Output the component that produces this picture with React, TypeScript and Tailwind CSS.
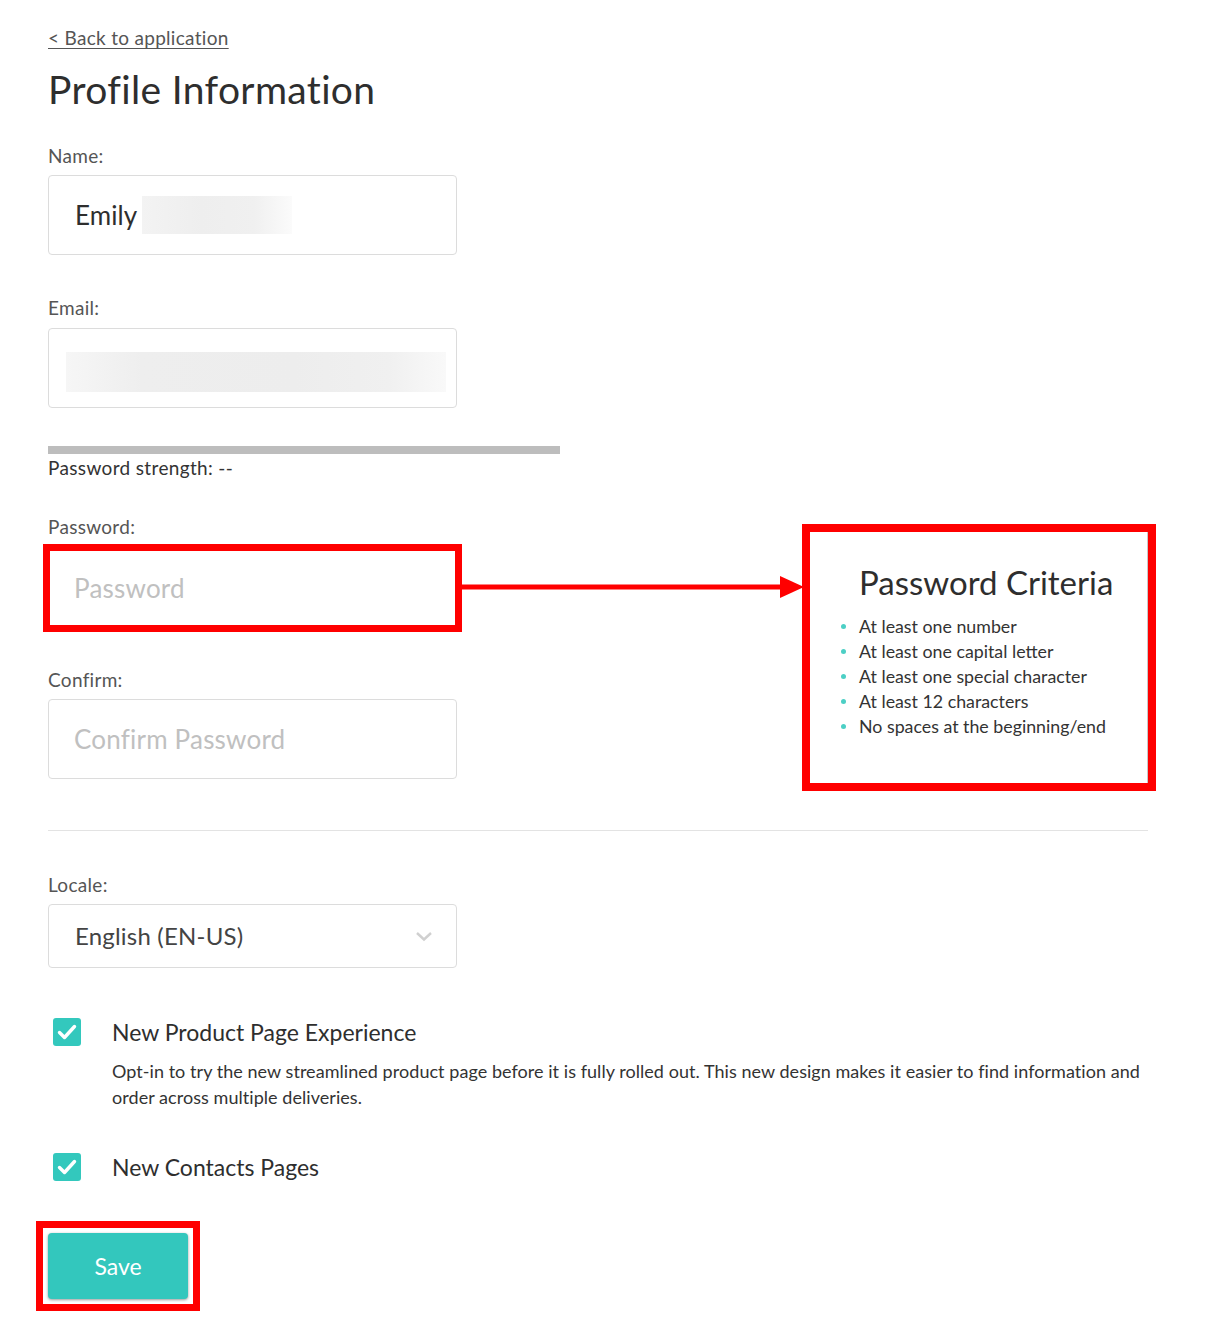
import React from "react";

function Label({ children, className = "" }: { children: React.ReactNode; className?: string }) {
  return <div className={`text-[19px] leading-[24px] tracking-[0.3px] text-[#555] ${className}`}>{children}</div>;
}

function Check() {
  return (
    <svg width="28" height="28" viewBox="0 0 28 28" className="shrink-0">
      <rect x="0" y="0" width="28" height="28" rx="3" fill="#33c8bd" />
      <polyline points="6.5,14.5 11.5,19.5 21.5,8.5" fill="none" stroke="#fff" strokeWidth="3.4" strokeLinecap="round" strokeLinejoin="round" />
    </svg>
  );
}

export default function App() {
  const criteria = [
    "At least one number",
    "At least one capital letter",
    "At least one special character",
    "At least 12 characters",
    "No spaces at the beginning/end",
  ];
  return (
    <div className="w-[1206px] h-[1324px] bg-white overflow-hidden font-['Lato',sans-serif] text-[#333]">
      <div className="pl-12 pt-[26px] w-[1148px]">
        <a href="#" className="block w-fit text-[19px] leading-[24px] tracking-[0.3px] text-[#555] underline underline-offset-[3px] decoration-1">
          &lt; Back to application
        </a>
        <h1 className="mt-[16px] text-[39px] leading-[46px] tracking-[0.35px] text-[#2e2e2e] font-normal">Profile Information</h1>

        <Label className="mt-[32px]">Name:</Label>
        <div className="mt-[7px] h-[80px] w-[409px] border border-[#dcdcdc] rounded-[4px] flex items-center pl-[26px]">
          <span className="text-[26px] tracking-[0.1px] text-[#2e2e2e]">Emily</span>
          <div className="ml-[5px] h-[38px] w-[150px] bg-[linear-gradient(90deg,#f3f3f3,#eeeeee_40%,#f0f0f0_75%,#fbfbfb)]" />
        </div>

        <Label className="mt-[41px]">Email:</Label>
        <div className="mt-[8px] h-[80px] w-[409px] border border-[#dcdcdc] rounded-[4px] pl-[17px] pt-[23px]">
          <div className="h-[40px] w-[380px] bg-[linear-gradient(90deg,#f6f6f6,#eeeeee_20%,#ededed_60%,#f0f0f0_85%,#f9f9f9)]" />
        </div>

        <div className="mt-[38px] h-[8px] w-[512px] bg-[#bdbdbd]" />
        <div className="mt-[2px] text-[19px] leading-[24px] tracking-[0.35px] text-[#333]">Password strength: --</div>

        <div className="relative mt-[35px]">
          <Label>Password:</Label>
          <div className="relative mt-[10px] h-[78px] w-[409px] border border-[#dcdcdc] rounded-[4px] flex items-center pl-[25px]">
            <span className="text-[26px] tracking-[0.2px] text-[#c0c0c0]">Password</span>
            <div className="absolute -inset-[6px] border-[7px] border-[#ff0000]" />
          </div>

          <svg className="absolute left-[414px] top-[60px]" width="342" height="24" viewBox="0 0 342 24">
            <line x1="0" y1="12" x2="322" y2="12" stroke="#ff0000" strokeWidth="5" />
            <polygon points="318,1 342,12 318,23" fill="#ff0000" />
          </svg>

          <div className="absolute left-[762px] top-[17px] w-[338px] h-[251px] bg-white border-r border-[#c8c8c8] outline-[8px] outline-solid outline-[#ff0000] pl-[49px] pt-[30px]">
            <div className="text-[33px] leading-[40px] text-[#2e2e2e]">Password Criteria</div>
            <ul className="mt-[12px] -ml-[18px]">
              {criteria.map((c) => (
                <li key={c} className="flex items-center text-[17.8px] leading-[25px] text-[#333]">
                  <span className="w-[5px] h-[5px] rounded-full bg-[#4ccfc5] mr-[13px]" />
                  {c}
                </li>
              ))}
            </ul>
          </div>
        </div>

        <Label className="mt-[41px]">Confirm:</Label>
        <div className="mt-[7px] h-[80px] w-[409px] border border-[#dcdcdc] rounded-[4px] flex items-center pl-[25px]">
          <span className="text-[26px] tracking-[0.2px] text-[#c0c0c0]">Confirm Password</span>
        </div>

        <div className="mt-[51px] h-px w-[1100px] bg-[#e3e3e3]" />

        <Label className="mt-[42px]">Locale:</Label>
        <div className="mt-[7px] h-[64px] w-[409px] border border-[#dcdcdc] rounded-[4px] flex items-center justify-between pl-[26px] pr-[23px]">
          <span className="text-[24px] tracking-[0.2px] text-[#444]">English (EN-US)</span>
          <svg width="18" height="12" viewBox="0 0 18 12">
            <polyline points="2,3 9,9.5 16,3" fill="none" stroke="#d0d0d0" strokeWidth="2.4" />
          </svg>
        </div>

        <div className="mt-[49px] flex">
          <div className="ml-[5px] mt-[1px]">
            <Check />
          </div>
          <div className="ml-[31px]">
            <div className="text-[23px] leading-[30px] text-[#2e2e2e]">New Product Page Experience</div>
            <p className="mt-[11px] text-[18px] leading-[26px] tracking-[0.05px] text-[#333] w-[1045px]">
              Opt-in to try the new streamlined product page before it is fully rolled out. This new design makes it easier to find information and order across multiple deliveries.
            </p>
          </div>
        </div>

        <div className="mt-[42px] flex">
          <div className="ml-[5px] mt-[1px]">
            <Check />
          </div>
          <div className="ml-[31px] text-[23px] leading-[30px] text-[#2e2e2e]">New Contacts Pages</div>
        </div>

        <div className="relative mt-[51px] w-fit">
          <button className="block h-[66px] w-[140px] rounded-[4px] bg-[#33c7bd] text-white text-[23px] shadow-[0_1px_3px_rgba(0,0,0,0.4)]">
            Save
          </button>
          <div className="absolute -inset-[12px] border-[7px] border-[#ff0000] pointer-events-none" />
        </div>
      </div>
    </div>
  );
}
